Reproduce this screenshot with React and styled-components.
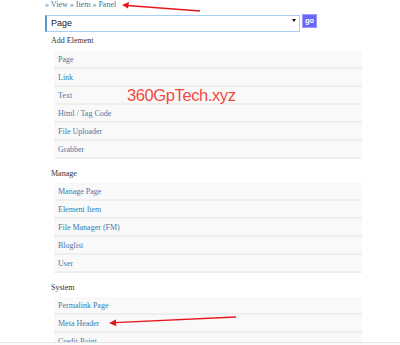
import React from "react";
import styled, { createGlobalStyle } from "styled-components";

const Global = createGlobalStyle`
  html, body { margin: 0; padding: 0; background: #ffffff; }
  body { font-family: "Liberation Serif", "Times New Roman", serif; overflow: hidden; }
`;

const Page = styled.div`
  position: relative;
  width: 400px;
  min-height: 345px;
  padding-left: 45px;
  box-sizing: border-box;
`;

const Crumbs = styled.div`
  height: 12px;
  line-height: 10px;
  font-size: 8px;
  color: #3a78ad;
`;

const Crumb = styled.a`
  color: #3a78ad;
  text-decoration: none;
`;

const FormRow = styled.div`
  display: flex;
  align-items: center;
  gap: 2px;
  height: 17px;
`;

const SelectWrap = styled.div`
  position: relative;
  width: 255px;
  height: 17px;
`;

const Select = styled.select`
  appearance: none;
  -webkit-appearance: none;
  width: 100%;
  height: 17px;
  box-sizing: border-box;
  margin: 0;
  padding: 0 0 0 4px;
  border: 1px solid #a6cff2;
  border-left: 2px solid #5b95d6;
  border-radius: 0;
  background: #fff;
  font-family: "Liberation Sans", Arial, sans-serif;
  font-size: 9px;
  color: #222;
  outline: none;
`;

const Caret = styled.svg`
  position: absolute;
  right: 4px;
  top: 7px;
  pointer-events: none;
`;

const Go = styled.button`
  width: 15px;
  height: 14px;
  margin: 1px 0 0 0;
  padding: 0;
  border: 1px solid #9d9dff;
  background: #6666fb;
  color: #fff;
  font-family: "Liberation Sans", Arial, sans-serif;
  font-weight: bold;
  font-size: 7.5px;
  line-height: 12px;
`;

const Heading = styled.div`
  box-sizing: border-box;
  height: 24px;
  padding: ${(p) => (p.$first ? "8px" : "9px")} 0 0 6px;
  line-height: 12px;
  font-size: 8px;
  color: #333;
  margin-top: ${(p) => (p.$first ? "-2px" : "0")};
`;

const List = styled.ul`
  list-style: none;
  margin: 0 0 0 9px;
  padding: 0;
  width: 308px;
`;

const Item = styled.li`
  box-sizing: border-box;
  height: 18px;
  padding: 1px 0 0 4px;
  line-height: 15px;
  font-size: 8px;
  background: #f9f9f9;
  border-bottom: 2px solid #eeeeee;
`;

const ItemLink = styled.a`
  color: #3e7aab;
  text-decoration: none;
`;

const Watermark = styled.div`
  position: absolute;
  left: 127px;
  top: 86px;
  font-family: "Liberation Sans", Arial, sans-serif;
  font-size: 16.5px;
  letter-spacing: -0.4px;
  line-height: 18px;
  color: #f04a40;
  pointer-events: none;
`;

const Arrows = styled.svg`
  position: absolute;
  left: 0;
  top: 0;
  pointer-events: none;
`;

const BottomEdge = styled.div`
  position: fixed;
  left: 0;
  right: 0;
  bottom: 0;
  height: 2px;
  border-top: 1px solid #e4e4e4;
  background: #fbfbfb;
`;

const sections = [
  { title: "Add Element", items: ["Page", "Link", "Text", "Html / Tag Code", "File Uploader", "Grabber"] },
  { title: "Manage", items: ["Manage Page", "Element Item", "File Manager (FM)", "Bloglist", "User"] },
  { title: "System", items: ["Permalink Page", "Meta Header", "Credit Point"] },
];

export default function App() {
  return (
    <>
      <Global />
      <Page>
        <Crumbs>
          » <Crumb href="#">View</Crumb> » <Crumb href="#">Item</Crumb> » <Crumb href="#">Panel</Crumb>
        </Crumbs>
        <FormRow>
          <SelectWrap>
            <Select defaultValue="Page">
              <option>Page</option>
              <option>Link</option>
              <option>Text</option>
            </Select>
            <Caret width="4" height="3" viewBox="0 0 4 3">
              <path d="M0 0 H4 L2 3 Z" fill="#111" />
            </Caret>
          </SelectWrap>
          <Go>go</Go>
        </FormRow>
        {sections.map((s, i) => (
          <React.Fragment key={s.title}>
            <Heading $first={i === 0}>{s.title}</Heading>
            <List>
              {s.items.map((it) => (
                <Item key={it}>
                  <ItemLink href="#">{it}</ItemLink>
                </Item>
              ))}
            </List>
          </React.Fragment>
        ))}
        <Watermark>360GpTech.xyz</Watermark>
        <Arrows width="400" height="345" viewBox="0 0 400 345">
          <line x1="200" y1="11" x2="127" y2="5.5" stroke="#e8161c" strokeWidth="1.3" />
          <path d="M122 5 L129 2 L128 8.5 Z" fill="#e8161c" />
          <line x1="236" y1="317" x2="115" y2="322.7" stroke="#e8161c" strokeWidth="1.3" />
          <path d="M109 323 L116 319.6 L116.3 326.2 Z" fill="#e8161c" />
        </Arrows>
      </Page>
      <BottomEdge />
    </>
  );
}
